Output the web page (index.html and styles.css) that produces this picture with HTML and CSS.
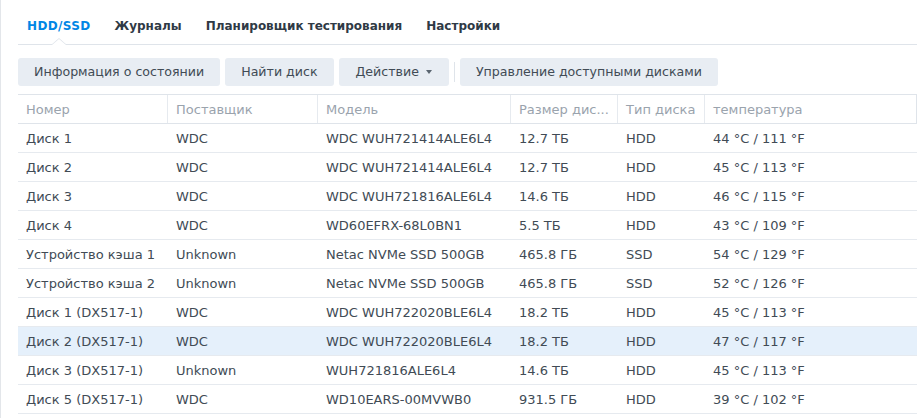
FILE: index.html
```html
<!DOCTYPE html>
<html lang="ru">
<head>
<meta charset="utf-8">
<link rel="stylesheet" href="styles.css">
</head>
<body>
<div class="page">
  <div class="tabs">
    <div class="tab active">HDD/SSD</div>
    <div class="tab">Журналы</div>
    <div class="tab">Планировщик тестирования</div>
    <div class="tab">Настройки</div>
  </div>
  <div class="toolbar">
    <button class="btn">Информация о состоянии</button>
    <button class="btn">Найти диск</button>
    <button class="btn drop">Действие <span class="caret"></span></button>
    <span class="sep"></span>
    <button class="btn">Управление доступными дисками</button>
  </div>
  <div class="grid">
    <div class="row head">
      <div class="c c1">Номер</div>
      <div class="c c2">Поставщик</div>
      <div class="c c3">Модель</div>
      <div class="c c4">Размер дис...</div>
      <div class="c c5">Тип диска</div>
      <div class="c c6">температура</div>
    </div>
    <div class="row"><div class="c c1">Диск 1</div><div class="c c2">WDC</div><div class="c c3">WDC WUH721414ALE6L4</div><div class="c c4">12.7 ТБ</div><div class="c c5">HDD</div><div class="c c6">44 °C / 111 °F</div></div>
    <div class="row"><div class="c c1">Диск 2</div><div class="c c2">WDC</div><div class="c c3">WDC WUH721414ALE6L4</div><div class="c c4">12.7 ТБ</div><div class="c c5">HDD</div><div class="c c6">45 °C / 113 °F</div></div>
    <div class="row"><div class="c c1">Диск 3</div><div class="c c2">WDC</div><div class="c c3">WDC WUH721816ALE6L4</div><div class="c c4">14.6 ТБ</div><div class="c c5">HDD</div><div class="c c6">46 °C / 115 °F</div></div>
    <div class="row"><div class="c c1">Диск 4</div><div class="c c2">WDC</div><div class="c c3">WD60EFRX-68L0BN1</div><div class="c c4">5.5 ТБ</div><div class="c c5">HDD</div><div class="c c6">43 °C / 109 °F</div></div>
    <div class="row"><div class="c c1">Устройство кэша 1</div><div class="c c2">Unknown</div><div class="c c3">Netac NVMe SSD 500GB</div><div class="c c4">465.8 ГБ</div><div class="c c5">SSD</div><div class="c c6">54 °C / 129 °F</div></div>
    <div class="row"><div class="c c1">Устройство кэша 2</div><div class="c c2">Unknown</div><div class="c c3">Netac NVMe SSD 500GB</div><div class="c c4">465.8 ГБ</div><div class="c c5">SSD</div><div class="c c6">52 °C / 126 °F</div></div>
    <div class="row"><div class="c c1">Диск 1 (DX517-1)</div><div class="c c2">WDC</div><div class="c c3">WDC WUH722020BLE6L4</div><div class="c c4">18.2 ТБ</div><div class="c c5">HDD</div><div class="c c6">45 °C / 113 °F</div></div>
    <div class="row sel"><div class="c c1">Диск 2 (DX517-1)</div><div class="c c2">WDC</div><div class="c c3">WDC WUH722020BLE6L4</div><div class="c c4">18.2 ТБ</div><div class="c c5">HDD</div><div class="c c6">47 °C / 117 °F</div></div>
    <div class="row"><div class="c c1">Диск 3 (DX517-1)</div><div class="c c2">Unknown</div><div class="c c3">WUH721816ALE6L4</div><div class="c c4">14.6 ТБ</div><div class="c c5">HDD</div><div class="c c6">45 °C / 113 °F</div></div>
    <div class="row"><div class="c c1">Диск 5 (DX517-1)</div><div class="c c2">WDC</div><div class="c c3">WD10EARS-00MVWB0</div><div class="c c4">931.5 ГБ</div><div class="c c5">HDD</div><div class="c c6">39 °C / 102 °F</div></div>
  </div>
</div>
</body>
</html>
```

FILE: styles.css
```css
html, body {
  margin: 0;
  padding: 0;
  background: #ffffff;
}
body {
  font-family: "DejaVu Sans", Verdana, sans-serif;
  font-size: 13px;
  color: #414b55;
  width: 917px;
  height: 418px;
  overflow: hidden;
}
.page {
  height: 418px;
  border-left: 1px solid #e3e6ea;
  padding-left: 17px;
  box-sizing: border-box;
}
.tabs {
  display: flex;
  gap: 24px;
  height: 45px;
  border-bottom: 1px solid #dfe4ea;
  padding-left: 9px;
  box-sizing: border-box;
  align-items: flex-start;
}
.tab {
  position: relative;
  font-weight: bold;
  font-size: 12px;
  line-height: 16px;
  padding-top: 18px;
  color: #2f3a45;
  height: 44px;
  box-sizing: border-box;
}
.tab.active {
  color: #0086e5;
  letter-spacing: 0.35px;
}
.tab.active::before {
  content: "";
  position: absolute;
  left: 50%;
  bottom: -1px;
  margin-left: -8px;
  width: 0;
  height: 0;
  border-left: 8px solid transparent;
  border-right: 8px solid transparent;
  border-bottom: 7px solid #dfe4ea;
}
.tab.active::after {
  content: "";
  position: absolute;
  left: 50%;
  bottom: -1px;
  margin-left: -7px;
  width: 0;
  height: 0;
  border-left: 7px solid transparent;
  border-right: 7px solid transparent;
  border-bottom: 6px solid #ffffff;
}
.toolbar {
  display: flex;
  align-items: center;
  gap: 5px;
  margin-top: 13px;
  height: 28px;
}
.btn {
  font-family: inherit;
  font-size: 12.6px;
  color: #414b55;
  background: #e8edf3;
  border: none;
  border-radius: 3px;
  height: 28px;
  padding: 0 16px;
  line-height: 28px;
  cursor: pointer;
}
.btn.drop {
  padding-left: 17px;
  padding-right: 17px;
}
.caret {
  display: inline-block;
  width: 0;
  height: 0;
  border-left: 3.5px solid transparent;
  border-right: 3.5px solid transparent;
  border-top: 4px solid #5a6570;
  vertical-align: middle;
  margin-left: 3px;
  position: relative;
  top: -1px;
}
.sep {
  width: 1px;
  height: 20px;
  background: #dfe4ea;
}
.grid {
  margin-top: 8px;
}
.row {
  display: flex;
  height: 29px;
  border-bottom: 1px solid #e6eaef;
  box-sizing: border-box;
  align-items: center;
}
.row.head {
  height: 30px;
  border-top: 1px solid #dfe4ea;
  border-bottom: 1px solid #dfe4ea;
  border-right: 1px solid #dfe4ea;
  color: #9aa3ad;
}
.row.sel {
  background: #e5f0fb;
}
.c {
  white-space: nowrap;
  overflow: hidden;
  box-sizing: border-box;
  height: 100%;
  display: flex;
  align-items: center;
  padding-left: 8px;
}
.head .c {
  border-right: 1px solid #e6eaef;
}
.head .c6 {
  border-right: none;
}
.c1 { width: 150px; }
.c2 { width: 150px; }
.c3 { width: 193px; }
.c4 { width: 107px; }
.c5 { width: 87px; }
.c6 { flex: 1; }
```
